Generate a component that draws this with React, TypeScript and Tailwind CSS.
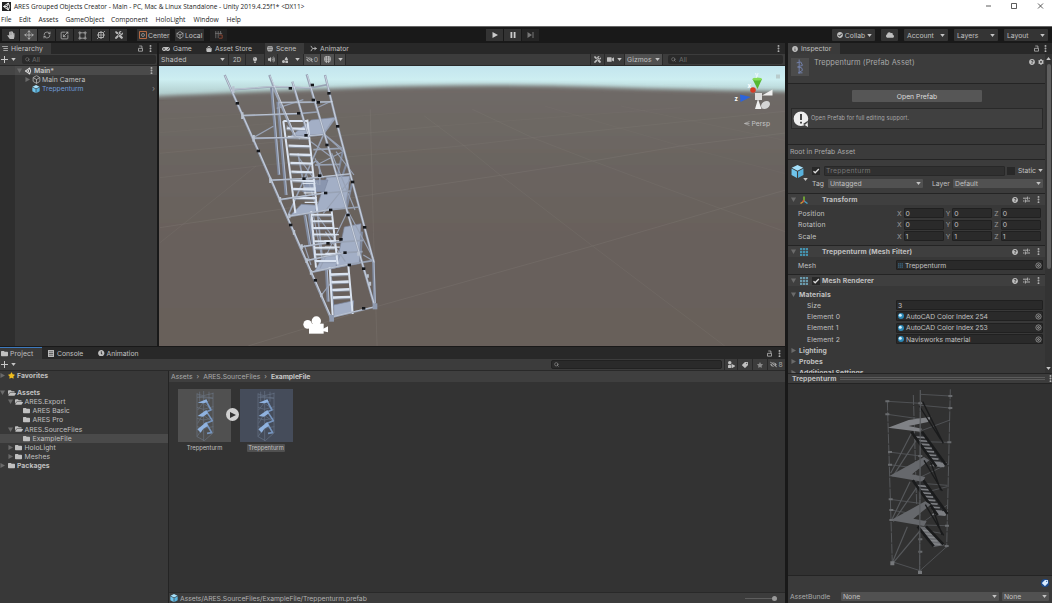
import React from "react";
import { FaHandPaper, FaTools, FaStar, FaCloud, FaVideo, FaGamepad, FaTag, FaCog, FaInfoCircle, FaQuestionCircle, FaCheckCircle, FaLightbulb, FaVolumeUp, FaEyeSlash, FaShoppingBag, FaFolder, FaFolderOpen, FaClock, FaShapes } from "react-icons/fa";
import { Move, RefreshCw, Scaling, Search, Box, MoreVertical } from "lucide-react";

type Kids = { children?: React.ReactNode; className?: string };

const Down = ({ className = "" }: { className?: string }) => (
  <svg viewBox="0 0 6 4" className={`h-[3px] w-[5px] shrink-0 fill-[#c4c4c4] ${className}`}><path d="M0 0h6L3 4z" /></svg>
);
const Fold = ({ open = false }: { open?: boolean }) => (
  <svg viewBox="0 0 6 6" className="h-[5px] w-[5px] shrink-0 fill-[#6b6b6b]"><path d={open ? "M0 .5h6L3 6z" : "M.5 0v6L6 3z"} /></svg>
);
const Dots = ({ className = "" }: { className?: string }) => (
  <MoreVertical strokeWidth={3} className={`size-[9px] shrink-0 text-[#b8b8b8] ${className}`} />
);
const Lock = () => (
  <svg viewBox="0 0 6 8" className="h-[7px] w-[5px] shrink-0" fill="none" stroke="#b0b0b0"><path d="M.6 3.8h4.8v3.4H.6zM4.7 3.8V1H1.500" /></svg>
);
const GridIcon = ({ className = "" }: { className?: string }) => (
  <svg viewBox="0 0 9 9" className={`shrink-0 ${className}`} fill="currentColor">
    <path d="M0 0h2.500v2.500H0zM3.250 0h2.500v2.500h-2.500zM6.500 0H9v2.500H6.500zM0 3.250h2.500v2.500H0zM3.250 3.250h2.500v2.500h-2.500zM6.500 3.250H9v2.500H6.500zM0 6.500h2.500V9H0zM3.250 6.500h2.500V9h-2.500zM6.500 6.500H9V9H6.500z" />
  </svg>
);
const HashIcon = ({ className = "" }: { className?: string }) => (
  <svg viewBox="0 0 8 8" className={`shrink-0 ${className}`} fill="none" stroke="currentColor" strokeWidth="1"><path d="M1 1h6v5H1zM0 3.500h8M2.700 0v8M5.300 0v8" /></svg>
);
const Presets = () => (
  <svg viewBox="0 0 8 8" className="size-[7px] shrink-0" fill="none" stroke="#c0c0c0"><path d="M0 2.500h5M6.500 2.500H8M5.300.7v3.600M0 5.700h1.500M3 5.700h5M2.700 3.900v3.600" /></svg>
);
const Cube = ({ className = "" }: { className?: string }) => (
  <svg viewBox="0 0 12 12" className={`shrink-0 ${className}`}>
    <path d="M6 0l5.300 2.600L6 5.400.7 2.600z" fill="#a5e0fa" />
    <path d="M.5 3.300l5 2.600V12l-5-2.800z" fill="#6fc4ec" />
    <path d="M11.500 3.300l-5 2.600V12l5-2.800z" fill="#58b2dd" />
  </svg>
);
const UnityMark = ({ className = "", bg = "none" }: { className?: string; bg?: string }) => (
  <svg viewBox="0 0 12 12" className={`shrink-0 ${className}`}>
    <rect width="12" height="12" fill={bg} />
    <path d="M8.500 1.300L2 6l6.500 4.700M8.500 1.300l1.600 4.700-1.600 4.700M2 6h4.500M6.500 6l2-4.500M6.500 6l2 4.500" fill="none" stroke="#eee" strokeWidth="1.300" />
  </svg>
);

const Tab = ({ children, active, className = "" }: Kids & { active?: boolean }) => (
  <div className={`flex h-full shrink-0 items-center gap-[3px] ${active ? "bg-[#3a3a3a]" : ""} ${className}`}>{children}</div>
);
const Tool = ({ children, className = "bg-[#303030]" }: Kids) => (
  <div className={`flex h-[12px] w-[17px] items-center justify-center text-[#bbb] ${className}`}>{children}</div>
);
const TopDrop = ({ children, className = "" }: Kids) => (
  <div className={`flex h-[12px] items-center rounded-[1px] bg-[#343434] px-[3px] ${className}`}>{children}</div>
);
const Cell = ({ children, className = "", spread }: Kids & { spread?: boolean }) => (
  <div className={`flex h-full shrink-0 items-center border-r border-[#292929] ${spread ? "justify-between" : "justify-center"} ${className}`}>{children}</div>
);

function TitleBar() {
  return (
    <header className="h-[26px] shrink-0 bg-white font-['Open_Sans',sans-serif] text-[#1c1c1c]">
      <div className="flex h-[12px] items-center pl-[2px]">
        <UnityMark className="size-[9px]" bg="#222" />
        <span className="ml-[3px] text-[6.500px]">ARES Grouped Objects Creator - Main - PC, Mac &amp; Linux Standalone - Unity 2019.4.25f1* &lt;DX11&gt;</span>
        <svg viewBox="0 0 60 8" className="ml-auto mr-[7px] h-[8px] w-[60px]" fill="none" stroke="#333" strokeWidth=".8">
          <path d="M1 4h5M26.500 1.500h5v5h-5zM53 1.500l5 5M58 1.500l-5 5" />
        </svg>
      </div>
      <div className="flex h-[14px] items-center pb-px pl-[1px] pt-[4px] text-[6.700px] leading-none">
        <span className="w-[18px]">File</span><span className="w-[19.500px]">Edit</span><span className="w-[27px]">Assets</span>
        <span className="w-[45.500px]">GameObject</span><span className="w-[44.500px]">Component</span><span className="w-[38px]">HoloLight</span>
        <span className="w-[33px]">Window</span><span>Help</span>
      </div>
    </header>
  );
}

function MainToolbar() {
  return (
    <div className="flex h-[17px] shrink-0 items-center border-t border-[#666] bg-[#191919]">
      <div className="flex w-[408px] gap-[1px] pl-[2px]">
        <Tool><FaHandPaper className="size-[8px]" /></Tool>
        <Tool className="bg-[#4a4a4a]"><Move className="size-[10px]" /></Tool>
        <Tool><RefreshCw className="size-[8px]" /></Tool>
        <Tool><Scaling className="size-[9px]" /></Tool>
        <Tool><svg viewBox="0 0 10 10" className="size-[9px]" fill="none" stroke="#bbb"><path d="M2 2h6v6H2z" strokeWidth=".7" /><path d="M0 2h4M2 0v4M8 0v4M6 2h4M0 8h4M2 6v4M6 8h4M8 6v4" strokeWidth=".6" /></svg></Tool>
        <Tool><svg viewBox="0 0 10 10" className="size-[10px]" fill="none" stroke="#bbb" strokeWidth=".7"><circle cx="5" cy="5" r="3" /><path d="M1 5h8M5 1v8M2.500 2.500h5v5h-5zM8 1l1 1M1 9l1-1" /></svg></Tool>
        <Tool><FaTools className="size-[8px]" /></Tool>
        <div className="ml-[9px] flex h-[12px] w-[33px] items-center gap-[1px] bg-[#303030] pl-[2px]">
          <svg viewBox="0 0 8 8" className="size-[8px] shrink-0" fill="none" stroke="#b56a45"><path d="M.5.5h7v7h-7z" /><circle cx="4" cy="4" r="1.500" stroke="#aaa" strokeWidth=".7" /></svg>
          <span>Center</span>
        </div>
        <div className="ml-[4px] flex h-[12px] w-[29px] items-center gap-[1px] bg-[#303030] pl-[1px]">
          <Box className="size-[8px] shrink-0" /><span>Local</span>
        </div>
        <Tool className="ml-[5px] bg-[#222]"><svg viewBox="0 0 10 10" className="size-[8px]" fill="none" stroke="#777"><path d="M1 0v9M4 0v9M0 3h9M7 0v4" /><path d="M5 5h4v4H5" stroke="#9c4a34" /></svg></Tool>
      </div>
      <div className="ml-[78px] flex gap-[1px]">
        <Tool className="bg-[#333]"><svg viewBox="0 0 6 6" className="size-[6px]" fill="#ccc"><path d="M.5 0L6 3 .5 6z" /></svg></Tool>
        <Tool className="bg-[#333]"><svg viewBox="0 0 6 6" className="size-[6px]" fill="#ccc"><path d="M.5 0h1.800v6H.5zM3.700 0h1.800v6H3.700z" /></svg></Tool>
        <Tool className="bg-[#252525]"><svg viewBox="0 0 7 6" className="h-[6px] w-[7px]" fill="#777"><path d="M.5 0L5 3 .5 6zM5.500 0h1v6h-1z" /></svg></Tool>
      </div>
      <div className="ml-auto mr-[4px] flex gap-[6px]">
        <TopDrop className="w-[43px] justify-between"><FaCheckCircle className="ml-[2px] size-[6px]" /><span>Collab</span><Down /></TopDrop>
        <TopDrop className="w-[17px] justify-center"><FaCloud className="size-[8px]" /></TopDrop>
        <TopDrop className="w-[44px] justify-between"><span>Account</span><Down /></TopDrop>
        <TopDrop className="w-[44px] justify-between"><span>Layers</span><Down /></TopDrop>
        <TopDrop className="w-[44px] justify-between"><span>Layout</span><Down /></TopDrop>
      </div>
    </div>
  );
}

const Plus = () => (
  <svg viewBox="0 0 7 7" className="ml-[1px] size-[7px] shrink-0" stroke="#c8c8c8"><path d="M3.500 0v7M0 3.500h7" /></svg>
);

function Hierarchy() {
  return (
    <section className="flex w-[157px] flex-col bg-[#383838]">
      <div className="flex h-[11px] shrink-0 items-center bg-[#282828] pr-[2px]">
        <Tab active className="w-[51px] pl-[2px]"><svg viewBox="0 0 7 6" className="h-[5px] w-[6px]" stroke="#c0c0c0"><path d="M0 .5h7M1.500 3H7M1.500 5.500H7" /></svg><span className="tracking-[0.08px]">Hierarchy</span></Tab>
        <div className="ml-auto flex items-center gap-[3px]"><Lock /><Dots /></div>
      </div>
      <div className="flex h-[12px] shrink-0 items-center border-b border-[#292929] bg-[#3c3c3c]">
        <Plus /><Down className="ml-[3px]" />
        <div className="ml-[6px] flex h-[9px] w-[134px] items-center gap-[2px] rounded-[2px] bg-[#2a2a2a] pl-[3px] text-[#6e6e6e]"><Search className="size-[5px] text-[#999]" />All</div>
      </div>
      <div className="flex flex-1">
        <div className="w-[15px] bg-[#2e2e2e]"><div className="h-[9px] bg-[#454545]" /></div>
        <div className="flex-1">
          <div className="flex h-[9px] items-center bg-[#4a4a4a] pl-[2px] pr-[1px] font-bold"><Fold open /><UnityMark className="ml-[2px] size-[8px]" /><span className="ml-[2px]">Main*</span><Dots className="ml-auto" /></div>
          <div className="flex h-[9px] items-center pl-[10px]"><Fold /><Box className="ml-[2px] size-[9px]" /><span className="ml-[1px] tracking-[0.06px]">Main Camera</span></div>
          <div className="flex h-[9px] items-center pl-[17px] pr-[2px] text-[#6e9cdc]"><Cube className="size-[8px]" /><span className="ml-[2px]">Treppenturm</span><span className="ml-auto text-[8px] text-[#8a8a8a]">›</span></div>
        </div>
      </div>
    </section>
  );
}

const rungs = (x1: number, y1: number, x2: number, y2: number, w: number, slope: number, n: number) =>
  Array.from({ length: n }, (_, i) => {
    const t = i / (n - 1);
    return `M${x1 + (x2 - x1) * t} ${y1 + (y2 - y1) * t}l${w} ${slope}`;
  }).join("");

const clamps = [[82, 115], [241, 70], [307, 60], [310, 105], [357, 85], [266, 145], [145, 258], [288, 211], [351, 240], [383, 184], [325, 112], [282, 341], [329, 332], [347, 384], [428, 351], [362, 435], [242, 480], [414, 450], [464, 487], [393, 523], [354, 535], [405, 563], [418, 600], [316, 646], [461, 611], [461, 730]];

function Tower() {
  return (
    <g transform="translate(51 -1) scale(.33333)" fill="none">
      <g stroke="#7f899e" strokeWidth="8">
        <path d="M184 65l23 265M203 110l25 280M284 450l15 90M295 440l22 150M349 615l5 95M360 610l9 120M490 590l4 125" />
        <path d="M415 335l-10 90M427 350L410 430M445 480l-5 115M456 500l-5 90M400 250l-20 95M413 285l-20 60" strokeWidth="6" />
      </g>
      <g stroke="#b9c4d6" strokeWidth="2.500">
        <path d="M187 65l22 263M206 110l25 280M287 450l15 90M298 440l22 150M352 615l5 95M492 590l4 125M418 335l-10 90M448 480l-5 115" />
      </g>
      <g fill="#a3afc6" stroke="#7f8aa2" strokeWidth="2">
        <path d="M240 215l64-50 76-8-38 50z" />
        <path d="M240 452l34-34 50 3-8 22zM316 440l34-103 69-4-12 96z" />
        <path d="M290 345h64l-12 35h-64z" fill="#8a96af" />
        <path d="M313 620l24-43 56-15-16 47zM377 608l26-122 50-10-5 120z" />
        <path d="M371 720l60-13-3 36-56 12z" />
      </g>
      <g stroke="#98a2b5" strokeWidth="3.500">
        <path d="M130 218l60-34M200 130l80-26M230 182l40 40M318 130l47-22M303 230l60 45M268 280l57 80M372 160l-30 45M420 345l-80 100M410 445l-80 165M345 210l55 50M315 280l25 60M396 250l-50-40M365 265l70 170M415 440l75 140M303 600l-20-60M275 545l90-15M210 405l90-15M333 692l35-45M460 570l30 18M432 330l-54-70M320 300l75-38M346 500l60 90M325 455l50 70M290 330l30 100M308 440l30 150" />
        <path d="M322 440l14 130M264 265l24 130M304 300q30-40 25 60M340 210L235 450" strokeWidth="5" />
      </g>
      <g stroke="#dae3f0" strokeWidth="6">
        <path d="M220 168l36 276M292 164l30 278M220 168h72M304 438l14 170M365 438l18 160M359 606l9 145M415 602l13 145" />
        <path d={rungs(230, 190, 252, 398, 65, 2, 9)} strokeWidth="7" />
        <path d={rungs(306, 449, 318, 588, 60, 0, 8)} strokeWidth="6" />
        <path d={rungs(362, 629, 369, 698, 52, -2, 4)} strokeWidth="8" />
        <path d={rungs(278, 355, 284, 412, 38, 0, 5)} strokeWidth="4" />
        <path d={rungs(340, 490, 346, 565, 45, 0, 5)} strokeWidth="4" />
      </g>
      <g stroke="#909bae" strokeWidth="2" transform="translate(0 5)">
        <path d={rungs(230, 190, 252, 398, 65, 2, 9)} />
        <path d={rungs(306, 449, 318, 588, 60, 0, 8)} />
        <path d={rungs(362, 629, 369, 698, 52, -2, 4)} />
      </g>
      <g stroke="#98a2b4" strokeWidth="7">
        <path d="M44 30L145 258 242 480 364 762M178 30l22 60 57 130M247 50l23 77 26 90M290 28l48 160 77 262 79 274M345 30l38 154 45 170 36 135 28 105" />
        <path d="M72 74l120-9 110 4 50-10M98 152l168-6 55-5M132 220l110-2 98-9M208 113l160-2M180 346l110-5 130-14M210 404l137-20 75-6M238 454l124-20 88-8M275 546l79-12 106-8M290 587l115-24 53-3M303 622l115-24 75-12M364 757l130-31M310 254l85-4M315 300l75-2" strokeWidth="5" />
      </g>
      <g stroke="#dbe2ee" strokeWidth="2.200">
        <path d="M45 32L146 258 243 480 365 760M180 32l76 180M248 50l48 165M292 30l202 692M346 32l37 152 45 170 64 238" />
        <path d="M72 73l120-9 110 4M98 151l168-6M132 219l110-2 98-9M208 112l160-2M180 345l110-5 130-14M210 403l137-20M238 453l124-20M275 545l79-12M290 586l115-24M303 621l115-24M364 756l130-31" strokeWidth="1.600" />
      </g>
      <path d="M70 64v20M97 142v20M131 210v20M181 338v16M210 396v16M238 446v14M252 495v14M275 538v14M290 580v14M303 615v14M334 685v12M480 650v12M473 628v10M445 560v12" stroke="#b9c2d0" strokeWidth="7" />
      <g fill="#14161a">{clamps.map(([x, y]) => <rect key={`${x}-${y}`} x={x - 5} y={y - 4} width="10" height="8" />)}</g>
      <g fill="#8f9aaf"><rect x="358" y="750" width="14" height="20" /><rect x="488" y="715" width="14" height="18" /></g>
      <g fill="#fff"><circle cx="319" cy="768" r="14" /><circle cx="293" cy="778" r="13" /><rect x="297" y="776" width="44" height="30" /><path d="M338 792l16-8v18l-16-4z" /></g>
    </g>
  );
}

function SceneView() {
  return (
    <svg viewBox="0 0 626 280" className="block h-[280px] w-[626px]">
      <defs>
        <linearGradient id="sky" x1="0" y1="0" x2="0" y2="1">
          <stop offset="0" stopColor="#c3e5ee" /><stop offset=".4" stopColor="#cdeef1" /><stop offset=".8" stopColor="#b3cfcf" /><stop offset="1" stopColor="#909a98" />
        </linearGradient>
        <linearGradient id="ground" x1="0" y1="0" x2="0" y2="1">
          <stop offset="0" stopColor="#6f6a67" /><stop offset=".4" stopColor="#69625d" /><stop offset="1" stopColor="#675f59" />
        </linearGradient>
        <filter id="haze" x="-5%" y="-10%" width="110%" height="120%"><feGaussianBlur stdDeviation="2.200" /></filter>
      </defs>
      <rect width="626" height="34" fill="url(#sky)" />
      <path d="M-30 33Q60 27 190 22T440 21T660 26V320H-30z" fill="url(#ground)" filter="url(#haze)" />
      <g transform="translate(1 0) scale(.4005 .3333)" stroke="#8e8781" strokeWidth="1" opacity=".6" fill="none">
        <path d="M220 840L540 722 1080 540 1400 428 1568 370M0 485L300 430 560 380 850 328 1080 285 1300 240 1568 200" />
        <path d="M0 335L280 295 750 240 930 215 1200 180 1568 135M0 262L230 235 700 180M660 150L760 240 850 328 1080 540 1410 840M780 130L930 215 1080 285 1400 428 1568 500M0 530L240 300" opacity=".75" />
        <path d="M960 120L1300 240 1568 325M1150 120L1568 225M0 200L600 140M0 160L400 130M700 180L1300 125" opacity=".4" />
        <path d="M525 130L533 500 542 840" />
      </g>
      <Tower />
      <g>
        <path d="M593.500 13h9.500l-4.500 10z" fill="#56b832" /><ellipse cx="598.200" cy="13" rx="4.700" ry="1.600" fill="#86dd58" />
        <path d="M581 28.500l10.500 2.500-10 5z" fill="#2c64dd" /><circle cx="594" cy="24" r="2.800" fill="#d63b25" />
        <path d="M603 29.500l10.500-6v6zM596 43l3-10 3.500 10z" fill="#f0f0f0" /><ellipse cx="606.500" cy="39" rx="4.800" ry="3.600" fill="#d5d5d5" transform="rotate(-35 606.500 39)" />
        <rect x="596" y="27" width="7" height="7" fill="#dedede" />
        <g fill="#fff" fontFamily="Inter" fontSize="6" fontWeight="700"><text x="575.500" y="35">z</text><text x="588.500" y="22">x</text><text x="596" y="11" opacity=".7">y</text></g>
        <text x="592.500" y="60" fontFamily="Inter" fontSize="6.800" fill="#c5c5c5">Persp</text>
        <path d="M590.500 55.500l-5 2 5 2M585.500 57.500h5" fill="none" stroke="#c5c5c5" strokeWidth=".6" />
        <path d="M617 8.500h4v4h-4z" fill="#b9cccd" />
      </g>
    </svg>
  );
}

function ScenePanel() {
  return (
    <section className="ml-[2px] flex w-[626px] flex-col bg-[#383838]">
      <div className="flex h-[11px] shrink-0 items-center bg-[#282828]">
        <Tab className="w-[44px] pl-[3px]"><FaGamepad className="size-[8px]" /><span>Game</span></Tab>
        <Tab className="w-[62px] pl-[3px]"><FaShoppingBag className="size-[6px]" /><span>Asset Store</span></Tab>
        <Tab active className="w-[39px] pl-[2px]"><HashIcon className="size-[6px]" /><span>Scene</span></Tab>
        <Tab className="pl-[6px]"><svg viewBox="0 0 8 8" className="size-[7px]" fill="none" stroke="#bbb"><path d="M1 1l2 3-2 3M3 4h4M5 2.500L7.500 4 5 5.500" /></svg><span>Animator</span></Tab>
        <Dots className="ml-auto mr-[2px]" />
      </div>
      <div className="flex h-[12px] shrink-0 items-center border-b border-[#292929] bg-[#3c3c3c]">
        <Cell spread className="w-[70px] pl-[2px] pr-[3px]"><span className="tracking-[0.2px]">Shaded</span><Down /></Cell>
        <Cell className="w-[17px] text-[6px]">2D</Cell>
        <Cell className="w-[19px]"><FaLightbulb className="size-[6px]" /></Cell>
        <Cell className="w-[13px]"><FaVolumeUp className="size-[7px]" /></Cell>
        <Cell className="w-[26px] gap-[7px]"><FaShapes className="size-[6px]" /><Down /></Cell>
        <Cell className="w-[17px] gap-[1px] bg-[#484848] text-[#aaa]"><FaEyeSlash className="size-[7px]" />0</Cell>
        <Cell className="w-[14px] bg-[#505050]"><HashIcon className="size-[7px]" /></Cell>
        <Cell className="w-[11px] bg-[#484848]"><Down /></Cell>
        <div className="flex-1" />
        <Cell className="w-[15px] border-l"><FaTools className="size-[7px]" /></Cell>
        <Cell className="w-[20px] gap-[3px]"><FaVideo className="size-[7px]" /><Down /></Cell>
        <Cell spread className="w-[38px] bg-[#505050] px-[2px]"><span className="tracking-[0.1px]">Gizmos</span><Down /></Cell>
        <div className="ml-[5px] mr-[2px] flex h-[9px] w-[115px] items-center gap-[3px] rounded-[2px] bg-[#2a2a2a] pl-[3px] text-[#6e6e6e]"><Search className="size-[5px] text-[#aaa]" />All</div>
      </div>
      <SceneView />
    </section>
  );
}

const TreeRow = ({ pad, fold, icon, label, bold, sel }: { pad: string; fold?: "open" | "closed"; icon: "star" | "open" | "folder"; label: string; bold?: boolean; sel?: boolean }) => (
  <div className={`flex h-[9.100px] items-center ${pad} ${bold ? "font-bold" : ""} ${sel ? "bg-[#4a4a4a]" : ""}`}>
    <div className="flex w-[7.500px]">{fold && <Fold open={fold === "open"} />}</div>
    <div className="flex w-[8px]">{icon === "star" ? <FaStar className="size-[7px] text-[#f0bd1e]" /> : icon === "open" ? <FaFolderOpen className="size-[8px]" /> : <FaFolder className="size-[7px]" />}</div>
    <span className="ml-[1.500px] tracking-[0.05px]">{label}</span>
  </div>
);

function ThumbTower() {
  return (
    <svg viewBox="0 0 60 156" className="h-[52px] w-[20px]" fill="none">
      <g stroke="#7b8ca3" strokeWidth="2" opacity=".6">
        <path d="M6 10v130M26 3v150M54 8v120M6 12l19 5 30-7M6 22l48 3M10 18l44 6M6 52l19 6 30-8M6 85l19 5 30-6M6 110l19 5 30-5M6 140l22 12 27-24M6 140l20-30M14 5v30M42 5v30" />
        <path d="M8 60l20-26M8 100l20-34M54 60L28 42M54 96L28 78" />
      </g>
      <g stroke="#7a9bc8" strokeWidth="5" strokeLinejoin="round" opacity=".9"><path d="M32 30l16 30-22 8M34 64l18 28-24 10M34 100l16 28-14 2" /></g>
      <g fill="#8fb2df"><path d="M8 38l26-10 4 8-12 4zM8 78l26-18 5 10-15 10zM7 118l27-22 5 12-14 8-8 12z" /></g>
    </svg>
  );
}

function Project() {
  return (
    <section className="mt-[1px] flex h-[256px] flex-col bg-[#383838]">
      <div className="flex h-[12px] shrink-0 items-center bg-[#282828] pr-[2px]">
        <Tab active className="w-[42px] border-t border-[#3d79bd] pl-[1px]"><FaFolder className="size-[7px]" /><span className="ml-[-1px] tracking-[0.1px]">Project</span></Tab>
        <Tab className="w-[50px] pl-[6px]"><svg viewBox="0 0 7 8" className="h-[7px] w-[6px]"><path d="M0 0h7v8H0z" fill="#c4c4c4" /><path d="M1 2h5M1 4h5M1 6h5" stroke="#333" strokeWidth=".8" /></svg><span>Console</span></Tab>
        <Tab className="pl-[6px]"><FaClock className="size-[6.500px]" /><span className="ml-[-1px]">Animation</span></Tab>
        <div className="ml-auto flex items-center gap-[3px]"><Lock /><Dots className="mr-[-1px]" /></div>
      </div>
      <div className="flex h-[12px] shrink-0 items-center border-b border-[#292929] bg-[#3c3c3c]">
        <Plus /><Down className="ml-[3px]" />
        <div className="ml-auto flex h-[9px] w-[171px] items-center rounded-[2px] border border-[#212121] bg-[#2a2a2a] pl-[2px]"><Search className="size-[5px]" /></div>
        <Cell className="ml-[2px] w-[14px] border-l"><FaShapes className="size-[7px] rotate-90" /></Cell>
        <Cell className="w-[15px]"><FaTag className="size-[6px] rotate-90" /></Cell>
        <Cell className="w-[15px] text-[#888]"><FaStar className="size-[6px]" /></Cell>
        <div className="flex w-[17px] items-center justify-center gap-[1px] text-[#aaa]"><FaEyeSlash className="size-[7px]" />8</div>
      </div>
      <div className="flex min-h-0 flex-1">
        <div className="w-[168px] shrink-0">
          <TreeRow pad="pl-0" fold="closed" icon="star" label="Favorites" bold />
          <div className="h-[8px]" />
          <TreeRow pad="pl-0" fold="open" icon="open" label="Assets" bold />
          <TreeRow pad="pl-[7.500px]" fold="open" icon="open" label="ARES.Export" />
          <TreeRow pad="pl-[15.500px]" icon="folder" label="ARES Basic" />
          <TreeRow pad="pl-[15.500px]" icon="folder" label="ARES Pro" />
          <TreeRow pad="pl-[7.500px]" fold="open" icon="open" label="ARES.SourceFiles" />
          <TreeRow pad="pl-[15.500px]" icon="folder" label="ExampleFile" sel />
          <TreeRow pad="pl-[7.500px]" fold="closed" icon="folder" label="HoloLight" />
          <TreeRow pad="pl-[7.500px]" fold="closed" icon="folder" label="Meshes" />
          <TreeRow pad="pl-0" fold="closed" icon="folder" label="Packages" bold />
        </div>
        <div className="flex flex-1 flex-col border-l border-[#242424] bg-[#333]">
          <div className="flex h-[11px] shrink-0 items-center gap-[4px] bg-[#3f3f3f] pl-[2px] text-[#aaa]">
            <span>Assets</span><span>›</span><span>ARES.SourceFiles</span><span>›</span><b className="tracking-[-0.06px] text-[#c8c8c8]">ExampleFile</b>
          </div>
          <div className="flex flex-1 pl-[9px] pt-[7px]">
            <figure className="relative flex h-[64px] w-[53px] flex-col items-center">
              <div className="flex h-[53px] w-[53px] items-center justify-center bg-[#505050]"><ThumbTower /></div>
              <figcaption className="mt-[2px] text-[5.800px] leading-[8px]">Treppenturm</figcaption>
              <div className="absolute left-[48px] top-[19px] flex size-[13px] items-center justify-center rounded-full bg-[#d0d0d0]"><svg viewBox="0 0 6 6" className="ml-[1px] size-[6px]" fill="#333"><path d="M0 0l6 3-6 3z" /></svg></div>
            </figure>
            <figure className="ml-[8.500px] flex h-[64px] w-[53px] flex-col items-center">
              <div className="flex h-[53px] w-[53px] items-center justify-center bg-[#454c5a]"><ThumbTower /></div>
              <figcaption className="mt-[2px] rounded-[1px] bg-[#505050] px-[1px] text-[5.800px] leading-[8px]">Treppenturm</figcaption>
            </figure>
          </div>
          <div className="flex h-[11px] shrink-0 items-center border-t border-[#292929] bg-[#3c3c3c] pl-[1px] text-[#b0b0b0]">
            <Cube className="size-[8px]" /><span className="ml-[2px] tracking-[-0.04px]">Assets/ARES.SourceFiles/ExampleFile/Treppenturm.prefab</span>
            <div className="ml-auto h-px w-[27px] bg-[#5e5e5e]" /><div className="mr-[8px] size-[5px] rounded-full bg-[#999]" />
          </div>
        </div>
      </div>
    </section>
  );
}

const CheckBox = () => (
  <div className="flex size-[8px] shrink-0 items-center justify-center bg-[#282828]"><svg viewBox="0 0 8 8" className="size-[8px]" fill="none" stroke="#ddd" strokeWidth="1.300"><path d="M1.500 4.200l1.700 1.600L6.800 2" /></svg></div>
);
const CompHeader = ({ icon, title, checked }: { icon: React.ReactNode; title: string; checked?: boolean }) => (
  <div className="flex h-[12px] shrink-0 items-center border-t border-[#242424] bg-[#3f3f3f] pl-[3px] pr-[2px]">
    <Fold open /><div className="ml-[2px] flex w-[11px] justify-center">{icon}</div>
    <div className="flex w-[13px] justify-center">{checked && <CheckBox />}</div>
    <b className="tracking-[0.12px]">{title}</b>
    <div className="ml-auto flex items-center gap-[4px]"><FaQuestionCircle className="mr-px size-[6px]" /><Presets /><Dots /></div>
  </div>
);
const Vec = ({ label, v }: { label: string; v: string }) => (
  <div className="flex h-[11.500px] items-center pl-[10px] pr-[2px]">
    <span className="w-[99px] tracking-[0.15px]">{label}</span>
    {["X", "Y", "Z"].map((a) => (
      <div key={a} className="flex flex-1 items-center"><span className="w-[6.500px] text-[#999]">{a}</span><span className="mr-[2px] flex h-[10px] flex-1 items-center rounded-[1px] border border-[#202020] bg-[#2a2a2a] pl-px">{v}</span></div>
    ))}
  </div>
);
const Ref = ({ label, v, kind, pad = "pl-[19px]" }: { label: string; v: string; kind?: "mat" | "mesh"; pad?: string }) => (
  <div className={`flex h-[11.300px] shrink-0 items-center ${pad} pr-[2px]`}>
    <span className="flex-1 tracking-[0.12px]">{label}</span>
    <div className="flex h-[10px] w-[147px] items-center rounded-[1px] border border-[#202020] bg-[#2a2a2a] pl-px">
      {kind === "mat" && <svg viewBox="0 0 8 8" className="mr-[2px] size-[6px]"><circle cx="4" cy="4" r="4" fill="#2c87b5" /><circle cx="3" cy="3" r="2" fill="#d5f0fb" /></svg>}
      {kind === "mesh" && <GridIcon className="mr-[2px] size-[5px] text-[#35556a]" />}
      <span className="tracking-[-0.03px]">{v}</span>
      {kind && <svg viewBox="0 0 8 8" className="ml-auto size-[7px]" fill="none" stroke="#aaa"><circle cx="4" cy="4" r="3" strokeWidth=".8" /><circle cx="4" cy="4" r="1" /></svg>}
    </div>
  </div>
);
const FoldRow = ({ label, open }: { label: string; open?: boolean }) => (
  <div className="flex h-[11px] shrink-0 items-center gap-[3px] pl-[3px]"><Fold open={open} /><b className="tracking-[0.1px]">{label}</b></div>
);
const Drop = ({ children, className = "" }: Kids) => (
  <div className={`flex h-[9px] items-center justify-between rounded-[1px] bg-[#515151] px-[2px] ${className}`}><span>{children}</span><Down /></div>
);

function PreviewTower() {
  const lift = [0, 146, 279];
  return (
    <svg viewBox="0 0 576 573" className="block h-[191px] w-[192px]">
      <g fill="none" stroke="#56585b" strokeWidth="3" transform="translate(0 -12)">
        <path d="M82 62l15 490M181 30l-2 550M271 28l-11 475M160 45l10 330" strokeDasharray="30 3" />
        <path d="M82 64l100 6M82 103l100 14M182 43l89 5M182 76l89 8M184 152l86-32M86 216l96 12M88 254l94 12M184 185l80 2M184 290l80-38M90 358l90 12M92 390l90 15M184 310l78 6M184 340l78-20M96 545l84 27M180 572l80-72M184 430l78-55M184 435l76 2M185 450l60 10" strokeWidth="2.500" />
        <path d="M155 158L92 280M182 160L98 290M150 305L95 420M182 305L100 425M142 440L98 545M182 450L98 550" strokeWidth="3.500" />
        <path d="M76 64h12M76 103h12M175 70h12M265 48h12M265 84h12M84 216h12M84 254h12M175 228h12M262 187h12M175 310h12M86 358h12M88 390h12M88 420h12M175 478h12M175 515h12M255 437h12M254 498h12" strokeWidth="6" stroke="#6a6c6f" />
      </g>
      {lift.map((dy, i) => (
        <g key={dy} transform={`translate(${i * 4} ${dy - 12})`}>
          <path d={i === 0 ? "M84 143l62-23 68-10-10 16-58 12 40 8-6 9z" : "M84 142l82-45 22-12 16 10-52 42 40 8-8 14z"} fill={i === 0 ? "#808286" : "#66686c"} />
          {i < 2 ? (
            <><path d="M162 160l28-2 72 98-30 8z" fill="#2a2b2d" /><path d={rungs(168, 171, 214, 246, 28, 2, 8)} stroke="#7c7e82" strokeWidth="5" /><path d="M208 258l20-10 32-1-8 15z" fill="#7c7e82" /></>
          ) : (
            <><path d="M165 160l30 2 50 55-35 5z" fill="#6a6c70" /><path d={rungs(172, 172, 205, 212, 28, 2, 5)} stroke="#85878a" strokeWidth="4" /></>
          )}
          <g fill="none" stroke="#1a1b1c" strokeWidth="8">
            <path d={i < 2 ? "M154 155l75 105M186 155l72 100" : "M165 160l48 60M190 160l52 54"} />
            <path d={i === 0 ? "M188 65l62 125M178 78l64 100" : "M188 95l55 92M208 100l30 85"} strokeWidth="4" />
          </g>
        </g>
      ))}
      <path d="M181 18l-2 550" stroke="#56585b" strokeWidth="3" />
      <g fill="#76787b"><path d="M91 532h12v12H91zM174 560h12v10h-12z" /></g>
    </svg>
  );
}

function Inspector() {
  return (
    <section className="ml-[3px] flex w-[264px] flex-col bg-[#383838]">
      <div className="flex h-[11px] shrink-0 items-center bg-[#282828] pr-[2px]">
        <Tab active className="w-[52px] pl-[4px]"><FaInfoCircle className="size-[6px]" /><span>Inspector</span></Tab>
        <div className="ml-auto flex items-center gap-[2px]"><Lock /><Dots /></div>
      </div>
      <div className="flex h-[319px] shrink-0">
        <div className="flex w-[257px] flex-col overflow-hidden">
          <div className="flex h-[30px] shrink-0 border-b border-[#242424] bg-[#3c3c3c] px-[3px] pt-[4px]">
            <div className="flex size-[18px] items-center justify-center overflow-hidden bg-[#4c4c4c]"><svg viewBox="0 0 12 18" className="h-[16px] w-[10px]" fill="none" stroke="#717fa7" strokeWidth="1.200"><path d="M2 4l5-1 2 4-6 2 5 1 1 3-5 3h5M5 0v17" /></svg></div>
            <span className="ml-[5px] text-[7.400px] leading-[10px] tracking-[0.13px] text-[#aaa]">Treppenturm (Prefab Asset)</span>
            <div className="ml-auto mr-[-2px] mt-px flex gap-[3px]"><FaQuestionCircle className="size-[6px]" /><FaCog className="size-[6px]" /></div>
          </div>
          <div className="flex h-[60px] shrink-0 flex-col">
            <div className="ml-[64px] mt-[6px] flex h-[12px] w-[130px] items-center justify-center rounded-[1px] bg-[#565656] text-[#ddd]">Open Prefab</div>
            <div className="ml-[3px] mt-[6px] flex h-[21px] w-[252px] items-center border border-[#292929] bg-[#404040] pl-[1px] text-[5.500px] tracking-[0.13px] text-[#aaa]">
              <svg viewBox="0 0 16 16" className="mr-[2px] size-[16px]"><path d="M8 .5a7.300 7.300 0 1 1-.1 14.600A7.300 7.300 0 0 1 8 .5zM10 13l5 3-.5-6z" fill="#eee" /><path d="M8 3v6M8 10.800v1.800" stroke="#333" strokeWidth="1.800" /></svg>
              Open Prefab for full editing support.
            </div>
          </div>
          <div className="flex h-[16px] shrink-0 items-center border-y border-[#242424] bg-[#3b3b3b] pl-[2px] pb-px text-[#aaa]">Root in Prefab Asset</div>
          <div className="flex h-[33px] shrink-0 bg-[#3c3c3c] pl-[3px] pr-[2px]">
            <div className="mt-[5px] w-[22px]"><Cube className="size-[13px]" /><Down className="ml-[12px]" /></div>
            <div className="flex-1 pt-[5px]">
              <div className="flex h-[11px] items-center">
                <CheckBox /><div className="ml-[4px] flex h-[10px] w-[181px] items-center rounded-[1px] border border-[#282828] bg-[#303030] pl-px tracking-[0.3px] text-[#777]">Treppenturm</div>
                <div className="ml-[2px] size-[8px] bg-[#282828]" /><span className="ml-[3px] tracking-[-0.05px]">Static</span><Down className="ml-[2px]" />
              </div>
              <div className="mt-[2px] flex h-[11px] items-center"><span className="w-[16px]">Tag</span><Drop className="w-[95px]">Untagged</Drop><span className="ml-[9px] w-[21px]">Layer</span><Drop className="w-[90px]">Default</Drop></div>
            </div>
          </div>
          <CompHeader title="Transform" icon={<svg viewBox="0 0 8 8" className="size-[8px]" fill="none" strokeWidth="1.400"><path d="M4 5V.5" stroke="#83c934" /><path d="M4 5L.5 7.500" stroke="#d39437" /><path d="M4 5l3.500 2.500" stroke="#48a0c4" /><path d="M3 4l1 2" stroke="#d64b3b" /></svg>} />
          <div className="h-[40px] shrink-0 pt-[2.500px]"><Vec label="Position" v="0" /><Vec label="Rotation" v="0" /><Vec label="Scale" v="1" /></div>
          <CompHeader title="Treppenturm (Mesh Filter)" icon={<GridIcon className="size-[8px] text-[#4592ae]" />} />
          <div className="h-[17px] shrink-0 pt-[2.500px]"><Ref label="Mesh" v="Treppenturm" kind="mesh" pad="pl-[10px]" /></div>
          <CompHeader title="Mesh Renderer" checked icon={<GridIcon className="size-[8px] text-[#6a9aac]" />} />
          <div className="h-[2.500px] shrink-0" />
          <FoldRow label="Materials" open />
          <Ref label="Size" v="3" /><Ref label="Element 0" v="AutoCAD Color Index 254" kind="mat" /><Ref label="Element 1" v="AutoCAD Color Index 253" kind="mat" /><Ref label="Element 2" v="Navisworks material" kind="mat" />
          <FoldRow label="Lighting" /><FoldRow label="Probes" /><FoldRow label="Additional Settings" />
        </div>
        <div className="flex w-[7px] flex-col items-center bg-[#333] py-[3px]">
          <Down className="rotate-180" /><div className="mt-[4px] h-[205px] w-[4px] rounded-full bg-[#606060]" /><Down className="mt-auto" />
        </div>
      </div>
      <div className="flex h-[11px] shrink-0 items-center border-y border-[#242424] bg-[#3c3c3c] pl-[4px]">
        <b className="tracking-[0.1px]">Treppenturm</b><div className="ml-[3px] h-[3px] flex-1 border-y border-[#5b5b5b]" /><Dots className="ml-[1px] mr-[-3px]" />
      </div>
      <div className="h-[191px] shrink-0 bg-[#313131] pl-[72px]"><PreviewTower /></div>
      <div className="flex flex-1 flex-col border-t border-[#242424] bg-[#3a3a3a]">
        <div className="flex h-[14px] items-center justify-end pr-[3px]"><div className="flex size-[8px] items-center justify-center rounded-full bg-[#1d4c8f]"><FaTag className="size-[6px] rotate-90 text-[#d8ebff]" /></div></div>
        <div className="flex h-[13px] items-center pl-[2px]"><span className="w-[51px] text-[#aaa]">AssetBundle</span><Drop className="w-[158px]">None</Drop><Drop className="ml-[3px] w-[47px]">None</Drop></div>
      </div>
    </section>
  );
}

export default function App() {
  return (
    <div className="flex h-[603px] w-[1052px] flex-col overflow-hidden whitespace-nowrap bg-[#191919] font-['Inter',sans-serif] text-[6.800px] leading-[9px] text-[#c0c0c0]">
      <TitleBar />
      <MainToolbar />
      <div className="flex h-[560px]">
        <div className="flex w-[785px] flex-col">
          <div className="flex h-[303px]"><Hierarchy /><ScenePanel /></div>
          <Project />
        </div>
        <Inspector />
      </div>
    </div>
  );
}
